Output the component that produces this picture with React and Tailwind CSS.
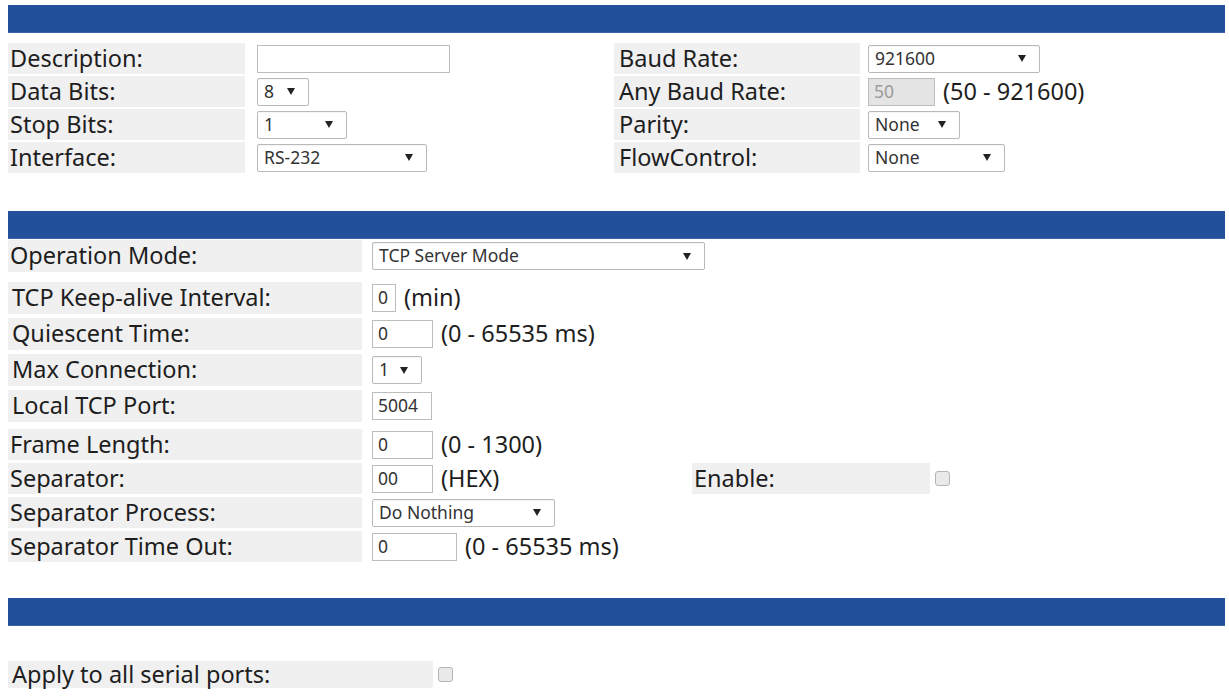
import React from "react";

const font = { fontFamily: '"Noto Sans", "Open Sans", sans-serif' };

function Bar({ className = "" }) {
  return <div className={`h-[28px] w-[1217px] bg-[#22509a] border-b border-[#3b65a8] ${className}`} />;
}

function Arrow() {
  return (
    <svg width="8" height="7" viewBox="0 0 8 7" className="shrink-0">
      <path d="M0 0 L8 0 L4 7 Z" fill="#222" />
    </svg>
  );
}

function Select({ value, width }) {
  return (
    <div
      className="h-[28px] flex items-center justify-between pl-[6px] pr-[13px] bg-white border border-[#b9b9b9] rounded-[2px] text-[17.5px] text-[#333] leading-none shadow-[inset_0_1px_1px_rgba(0,0,0,0.04)]"
      style={{ width }}
    >
      <span>{value}</span>
      <Arrow />
    </div>
  );
}

function Input({ value = "", width, disabled }) {
  return (
    <div
      className={`h-[28px] flex items-center px-[5px] border border-[#bdbdbd] text-[17.5px] leading-none ${
        disabled ? "bg-[#e4e4e4] text-[#9a9a9a]" : "bg-white text-[#333]"
      }`}
      style={{ width }}
    >
      {value}
    </div>
  );
}

function Label({ children, width, pad = "pl-[2px]", h = "h-full" }) {
  return (
    <div
      className={`${h} flex items-center ${pad} bg-[#f0f0f0] text-[23.5px] text-[#1e1e1e] leading-none whitespace-nowrap`}
      style={{ width }}
    >
      {children}
    </div>
  );
}

function Note({ children }) {
  return <span className="ml-[8px] text-[23.5px] text-[#1e1e1e] leading-none whitespace-nowrap">{children}</span>;
}

function Checkbox() {
  return <div className="w-[15px] h-[15px] rounded-[3px] border border-[#b5b5b5] bg-[#e9e9e9]" />;
}

export default function App() {
  const s1 = [
    ["Description:", <Input width={193} />, "Baud Rate:", <Select value="921600" width={172} />],
    ["Data Bits:", <Select value="8" width={52} />, "Any Baud Rate:", <div className="flex items-center"><Input value="50" width={67} disabled /><Note>(50 - 921600)</Note></div>],
    ["Stop Bits:", <Select value="1" width={90} />, "Parity:", <Select value="None" width={92} />],
    ["Interface:", <Select value="RS-232" width={170} />, "FlowControl:", <Select value="None" width={137} />],
  ];

  const keepAlive = [
    ["TCP Keep-alive Interval:", <div className="flex items-center"><Input value="0" width={24} /><Note>(min)</Note></div>],
    ["Quiescent Time:", <div className="flex items-center"><Input value="0" width={61} /><Note>(0 - 65535 ms)</Note></div>],
    ["Max Connection:", <Select value="1" width={50} />],
    ["Local TCP Port:", <Input value="5004" width={60} />],
  ];

  return (
    <div className="w-[1229px] h-[698px] bg-white overflow-hidden pt-[5px] pl-[8px]" style={font}>
      <Bar />

      {/* serial settings */}
      <div className="mt-[10px] flex flex-col gap-[2px]">
        {s1.map(([l1, c1, l2, c2]) => (
          <div key={l1} className="h-[31px] flex items-center">
            <Label width={237}>{l1}</Label>
            <div className="ml-[12px] w-[357px] flex items-center">{c1}</div>
            <Label width={246} pad="pl-[5px]">{l2}</Label>
            <div className="ml-[8px] flex items-center">{c2}</div>
          </div>
        ))}
      </div>

      <Bar className="mt-[38px]" />

      {/* operation mode */}
      <div className="mt-[1px] h-[32px] flex items-center">
        <Label width={354}>Operation Mode:</Label>
        <div className="ml-[10px]">
          <Select value="TCP Server Mode" width={333} />
        </div>
      </div>

      <div className="mt-[10px] flex flex-col gap-[4px]">
        {keepAlive.map(([l, c]) => (
          <div key={l} className="h-[32px] flex items-center">
            <Label width={354} pad="pl-[4px]">{l}</Label>
            <div className="ml-[10px] flex items-center">{c}</div>
          </div>
        ))}
      </div>

      <div className="mt-[7px] flex flex-col gap-[3px]">
        <div className="h-[31px] flex items-center">
          <Label width={354}>Frame Length:</Label>
          <div className="ml-[10px] flex items-center">
            <Input value="0" width={61} />
            <Note>(0 - 1300)</Note>
          </div>
        </div>
        <div className="h-[31px] flex items-center">
          <Label width={354}>Separator:</Label>
          <div className="ml-[10px] w-[320px] flex items-center">
            <Input value="00" width={61} />
            <Note>(HEX)</Note>
          </div>
          <Label width={238} pad="pl-[2px]">Enable:</Label>
          <div className="ml-[5px]">
            <Checkbox />
          </div>
        </div>
        <div className="h-[31px] flex items-center">
          <Label width={354}>Separator Process:</Label>
          <div className="ml-[10px]">
            <Select value="Do Nothing" width={183} />
          </div>
        </div>
        <div className="h-[31px] flex items-center">
          <Label width={354}>Separator Time Out:</Label>
          <div className="ml-[10px] flex items-center">
            <Input value="0" width={85} />
            <Note>(0 - 65535 ms)</Note>
          </div>
        </div>
      </div>

      <Bar className="mt-[36px]" />

      <div className="mt-[35px] h-[27px] flex items-center">
        <Label width={425} pad="pl-[4px]">Apply to all serial ports:</Label>
        <div className="ml-[5px]">
          <Checkbox />
        </div>
      </div>
    </div>
  );
}
